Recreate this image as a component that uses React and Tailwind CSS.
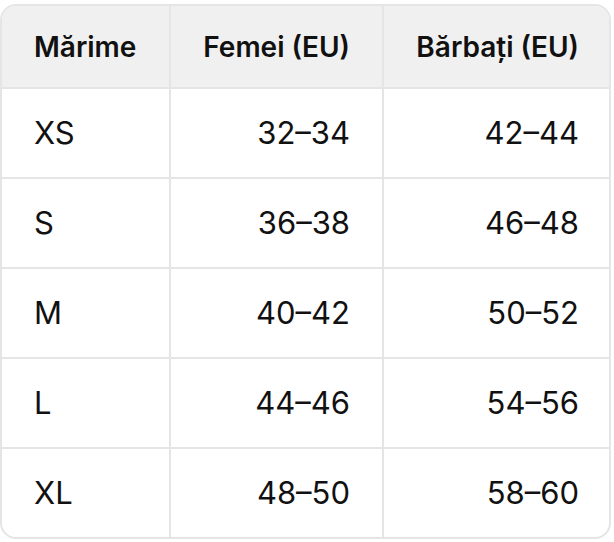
import React from "react";

const rows = [
  ["XS", "32–34", "42–44"],
  ["S", "36–38", "46–48"],
  ["M", "40–42", "50–52"],
  ["L", "44–46", "54–56"],
  ["XL", "48–50", "58–60"],
];

function SizeTable() {
  return (
    <div className="pt-[4px] bg-white">
      <div className="w-[611px] rounded-[16px] border-2 border-[#e5e5e5] overflow-hidden font-['Inter',sans-serif] text-[#111] whitespace-nowrap">
        {/* Header */}
        <div className="grid grid-cols-[169px_213px_1fr] h-[83px] bg-[#f0f0f0] border-b-2 border-[#e5e5e5] text-[28px] font-semibold">
          <div className="flex items-center pl-8 border-r-2 border-[#e5e5e5]">Mărime</div>
          <div className="flex items-center justify-end pr-8 border-r-2 border-[#e5e5e5]">Femei (EU)</div>
          <div className="flex items-center justify-end pr-[30px]">Bărbați (EU)</div>
        </div>

        {/* Rows */}
        {rows.map((r, i) => (
          <div
            key={r[0]}
            className={
              "grid grid-cols-[169px_213px_1fr] text-[31px] " +
              (i < rows.length - 1 ? "h-[90px] border-b-2 border-[#e5e5e5]" : "h-[88px]")
            }
          >
            <div className="flex items-center pl-8 border-r-2 border-[#e5e5e5]">{r[0]}</div>
            <div className="flex items-center justify-end pr-8 border-r-2 border-[#e5e5e5]">{r[1]}</div>
            <div className="flex items-center justify-end pr-[30px]">{r[2]}</div>
          </div>
        ))}
      </div>
    </div>
  );
}

export default function App() {
  return <SizeTable />;
}
